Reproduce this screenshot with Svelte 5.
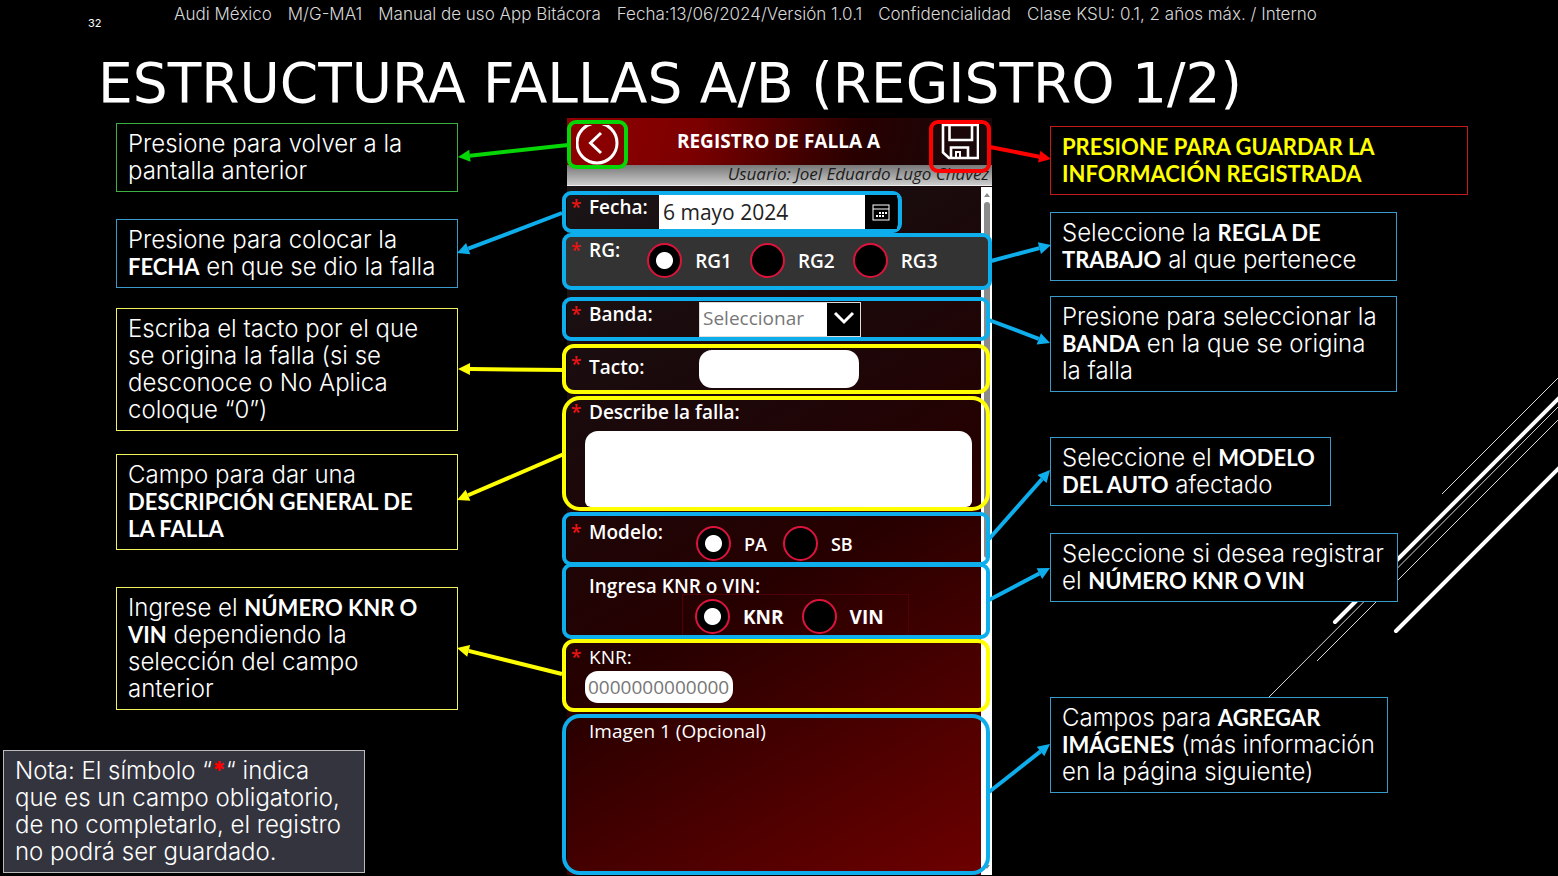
<script>
  const leftNotes = [
    { tone: 'green', gap: 5, lines: [[['Presione para volver a la']], [['pantalla anterior']]] },
    { tone: 'blue', gap: 27, lines: [[['Presione para colocar la']], [['FECHA', true], [' en que se dio la falla']]] },
    { tone: 'yellow', gap: 20, lines: [[['Escriba el tacto por el que']], [['se origina la falla (si se']], [['desconoce o No Aplica']], [['coloque “0”)']]] },
    { tone: 'yellow', gap: 23, lines: [[['Campo para dar una']], [['DESCRIPCIÓN GENERAL DE', true]], [['LA FALLA', true]]] },
    { tone: 'yellow', gap: 37, lines: [[['Ingrese el '], ['NÚMERO KNR O', true]], [['VIN', true], [' dependiendo la']], [['selección del campo']], [['anterior']]] }
  ];
  const rightNotes = [
    { tone: 'red', gap: 8, width: 418, lines: [[['PRESIONE PARA GUARDAR LA', true]], [['INFORMACIÓN REGISTRADA', true]]] },
    { tone: 'blue', gap: 17, width: 347, lines: [[['Seleccione la '], ['REGLA DE', true]], [['TRABAJO', true], [' al que pertenece']]] },
    { tone: 'blue', gap: 15, width: 347, lines: [[['Presione para seleccionar la']], [['BANDA', true], [' en la que se origina']], [['la falla']]] },
    { tone: 'blue', gap: 45, width: 281, lines: [[['Seleccione el '], ['MODELO', true]], [['DEL AUTO', true], [' afectado']]] },
    { tone: 'blue', gap: 27, width: 348, lines: [[['Seleccione si desea registrar']], [['el '], ['NÚMERO KNR O VIN', true]]] },
    { tone: 'blue', gap: 95, width: 338, lines: [[['Campos para '], ['AGREGAR', true]], [['IMÁGENES', true], [' (más información']], [['en la página siguiente)']]] }
  ];
  const green = '#06d506', blue = '#0eaeec', yellow = '#ffff00', red = '#ff0000';
  const arrows = [
    [568, 145, 458, 157, green], [562, 213, 457, 253, blue], [565, 370, 458, 369, yellow],
    [564, 454, 457, 500, yellow], [562, 674, 457, 648, yellow], [990, 147, 1051, 159, red],
    [991, 261, 1051, 245, blue], [989, 320, 1050, 343, blue], [989, 539, 1050, 470, blue],
    [989, 600, 1050, 568, blue], [989, 792, 1050, 744, blue]
  ].map(([x1, y1, x2, y2, color]) => {
    const len = Math.hypot(x2 - x1, y2 - y1);
    const ux = (x2 - x1) / len, uy = (y2 - y1) / len;
    const bx = x2 - ux * 12, by = y2 - uy * 12;
    return {
      x1, y1, bx, by, color,
      head: `${x2},${y2} ${bx - uy * 6},${by + ux * 6} ${bx + uy * 6},${by - ux * 6}`
    };
  });
  let rg = $state('RG1');
  let modelo = $state('PA');
  let tipo = $state('KNR');
</script>

{#snippet note(n)}
  <p class="note {n.tone}" style:margin-top="{n.gap}px" style:width={n.width ? n.width + 'px' : null}>
    {#each n.lines as line}
      <span class="line">{#each line as [text, strong]}{#if strong}<strong>{text}</strong>{:else}{text}{/if}{/each}</span>
    {/each}
  </p>
{/snippet}

<div class="slide">
  <svg class="rays" viewBox="1258 368 300 340" aria-hidden="true">
    <path d="M1442 494 1558 378M1268 698 1558 407M1317 661 1558 420" fill="none" stroke="#d8d8d8" />
    <path d="M1335 622 1560 397M1396 631 1560 467" fill="none" stroke="#fff" stroke-width="4" stroke-linecap="round" />
  </svg>

  <header class="meta">
    <span class="page">32</span>
    <div class="parts">
      <span>Audi México</span>
      <span>M/G-MA1</span>
      <span>Manual de uso App Bitácora</span>
      <span>Fecha:13/06/2024/Versión 1.0.1</span>
      <span>Confidencialidad</span>
      <span>Clase KSU: 0.1, 2 años máx. / Interno</span>
    </div>
  </header>
  <h1>ESTRUCTURA FALLAS A/B (REGISTRO 1/2)</h1>

  <main>
    <div class="left">
      {#each leftNotes as n}{@render note(n)}{/each}
      <p class="legend">
        <span class="line">Nota: El símbolo “<b>*</b>“ indica</span>
        <span class="line">que es un campo obligatorio,</span>
        <span class="line">de no completarlo, el registro</span>
        <span class="line">no podrá ser guardado.</span>
      </p>
    </div>

    <div class="centre">
      <form class="phone" onsubmit={(e) => e.preventDefault()}>
        <div class="bar">
          <button type="button" class="back" aria-label="Volver">
            <svg width="44" height="40" viewBox="0 0 44 40"><g fill="none" stroke="#fff" stroke-width="3"><circle cx="21" cy="18" r="20" /><path d="M25 8 14.500 18 25 28" /></g></svg>
          </button>
          <h2>REGISTRO DE FALLA A</h2>
          <button type="button" class="save" aria-label="Guardar">
            <svg width="38" height="37" viewBox="0 0 38 37"><g fill="none" stroke="#fff" stroke-width="2.6"><path d="M2 1V28.500L8 34H37V1Z" /><path d="M8.500 1V16H31V1" /><path d="M10 34V23.500H27V34" /><path d="M15 34V28H19V34" stroke-width="2" /></g></svg>
          </button>
        </div>
        <p class="user">Usuario: Joel Eduardo Lugo Chavez</p>

        <div class="body">
          <div class="box fecha">
            <i>*</i><label for="fecha">Fecha:</label>
            <input id="fecha" type="text" value="6 mayo 2024" />
            <button type="button" aria-label="Calendario">
              <svg width="18" height="17" viewBox="0 0 18 17"><g fill="none" stroke="#fff"><rect x="1" y="1" width="16" height="15" /><path d="M1 5H17" /><path d="M7 9H15M4 12H13" stroke-width="2" stroke-dasharray="2 1" /></g></svg>
            </button>
          </div>

          <div class="box rg" role="radiogroup" aria-labelledby="l-rg">
            <i>*</i><span class="name" id="l-rg">RG:</span>
            <div class="radios">
              {#each ['RG1', 'RG2', 'RG3'] as v}
                <label><input type="radio" name="rg" value={v} bind:group={rg} />{v}</label>
              {/each}
            </div>
          </div>

          <div class="box banda">
            <i>*</i><label for="banda">Banda:</label>
            <div class="select">
              <select id="banda"><option>Seleccionar</option></select>
              <svg width="22" height="14" viewBox="0 0 22 14"><path d="M2 2 11 11 20 2" fill="none" stroke="#fff" stroke-width="3" /></svg>
            </div>
          </div>

          <div class="box tacto">
            <i>*</i><label for="tacto">Tacto:</label>
            <input id="tacto" type="text" />
          </div>

          <div class="box describe">
            <i>*</i><label for="describe">Describe la falla:</label>
            <textarea id="describe"></textarea>
          </div>

          <div class="box modelo" role="radiogroup" aria-labelledby="l-modelo">
            <i>*</i><span class="name" id="l-modelo">Modelo:</span>
            <div class="radios">
              {#each ['PA', 'SB'] as v}
                <label><input type="radio" name="modelo" value={v} bind:group={modelo} />{v}</label>
              {/each}
            </div>
          </div>

          <div class="box tipo" role="radiogroup" aria-labelledby="l-tipo">
            <span class="name" id="l-tipo">Ingresa KNR o VIN:</span>
            <div class="radios">
              {#each ['KNR', 'VIN'] as v}
                <label><input type="radio" name="tipo" value={v} bind:group={tipo} />{v}</label>
              {/each}
            </div>
          </div>

          <div class="box knr">
            <i>*</i><label for="knr">KNR:</label>
            <input id="knr" type="text" placeholder="0000000000000" />
          </div>

          <div class="box imagen"><i></i><span class="name">Imagen 1 (Opcional)</span></div>

          <div class="scroll" aria-hidden="true">
            <svg width="8" height="6" viewBox="0 0 8 6"><path d="M1 5 4 1 7 5Z" fill="#888" /></svg>
            <span></span>
            <svg width="8" height="6" viewBox="0 0 8 6"><path d="M1 1 4 5 7 1Z" fill="#888" /></svg>
          </div>
        </div>
      </form>

      <svg class="arrows" viewBox="452 118 610 758" aria-hidden="true">
        {#each arrows as a}
          <line x1={a.x1} y1={a.y1} x2={a.bx} y2={a.by} stroke={a.color} stroke-width="4" />
          <polygon points={a.head} fill={a.color} />
        {/each}
      </svg>
    </div>

    <div class="right">
      {#each rightNotes as n}{@render note(n)}{/each}
    </div>
  </main>
</div>

<style>
  :global(body) { margin: 0; background: #000; }
  .slide, .slide * { box-sizing: border-box; }
  .slide {
    position: relative;
    min-height: 100vh;
    overflow: hidden;
    background: #000;
    color: #fff;
    font-family: Inter, 'Open Sans', sans-serif;
  }
  .rays { position: absolute; right: 0; top: 368px; width: 300px; height: 340px; }
  .meta {
    display: flex;
    height: 30px;
    padding-left: 88px;
    line-height: 28px;
    white-space: nowrap;
  }
  .page { width: 86px; padding-top: 9px; font-size: 11px; }
  .parts { display: flex; gap: 16px; font-size: 17px; font-weight: 300; color: #d8d8d8; }
  h1 {
    height: 88px;
    margin: 0;
    padding-left: 98px;
    font: 400 55px/106px 'DejaVu Sans', sans-serif;
    white-space: nowrap;
  }
  main {
    position: relative;
    display: grid;
    grid-template-columns: 1fr 430px 1fr;
    padding-right: 4px;
  }
  .left, .right { display: flex; flex-direction: column; }
  .left { align-items: flex-end; padding-right: 104px; }
  .right { align-items: flex-start; padding-left: 58px; }
  .note, .legend {
    margin: 0;
    padding: 6px 11px 7px;
    border: 1px solid;
    font-size: 24px;
    line-height: 27px;
    font-weight: 300;
    background: #000;
  }
  .note { width: 342px; }
  .line { display: block; white-space: nowrap; color: #fff; }
  strong { font-family: Lato, sans-serif; font-size: 22px; line-height: 1; font-weight: 700; }
  .green { border-color: #3cb043; }
  .blue { border-color: #3a9bcb; }
  .yellow { border-color: #f2f25a; }
  .red { border-color: #c41a1a; }
  .red .line { color: #ff0; }
  .legend {
    align-self: flex-start;
    width: 362px;
    margin: 40px 0 0 3px;
    background: #34343e;
    border-color: #bbb;
  }
  .legend b { color: #f00; font-weight: 800; }

  .centre { position: relative; font-family: 'Open Sans', 'Noto Sans', sans-serif; }
  .arrows { position: absolute; left: -110px; top: 0; width: 610px; height: 758px; pointer-events: none; }
  .phone { margin-left: 5px; }
  .bar {
    position: relative;
    display: flex;
    justify-content: space-between;
    align-items: flex-start;
    height: 47px;
    padding: 2px 1px 0 0;
    background: linear-gradient(100deg, #900000 0%, #7c0000 30%, #280000 68%, #16090b 100%);
  }
  button { padding: 0; background: none; color: inherit; font: inherit; }
  .bar button { border: 4px solid #06d506; border-radius: 9px; }
  .bar svg { display: block; margin: 0 auto; }
  .back { width: 61px; height: 49px; }
  .bar .save { width: 62px; height: 53px; border-color: #f00; padding-bottom: 8px; }
  h2 { margin: 0; font-size: 19px; line-height: 42px; font-weight: 700; }
  .user {
    height: 21px;
    margin: 0;
    padding-right: 3px;
    text-align: right;
    font-size: 17px;
    line-height: 18px;
    font-style: italic;
    color: #1c1c1c;
    background: linear-gradient(#777, #ccc);
    border-bottom: 1px solid #eee;
  }
  .body {
    position: relative;
    padding-top: 5px;
    background: linear-gradient(150deg, #1a1517 0%, #1a090b 28%, #260000 55%, #480000 76%, #6e0000 100%);
  }
  .box {
    position: relative;
    z-index: 1;
    display: grid;
    grid-template-columns: 18px auto 1fr;
    align-items: start;
    width: 428px;
    margin-left: -5px;
    padding: 1px 0 0 5px;
    border: 4px solid #0eaeec;
    border-radius: 9px;
    font-size: 19px;
    line-height: 24px;
    font-weight: 600;
    white-space: nowrap;
  }
  i { color: #e81414; font-style: normal; font-size: 19px; }
  .box input[type='text'], textarea, select {
    width: 100%;
    height: 100%;
    margin: 0;
    border: 0;
    background: #fff;
    font: 400 19px/24px 'Open Sans', sans-serif;
    color: #222;
  }
  .fecha { grid-template-columns: 18px 70px 206px 32px; width: 340px; height: 42px; padding-top: 0; }
  .fecha input[type='text'] { padding: 0 4px; font-size: 21px; }
  .fecha button { display: grid; place-items: center; height: 34px; border: 0; background: #000; }
  .rg { height: 57px; background: #333; width: 430px; }
  .banda { grid-template-columns: 18px 110px 162px; height: 44px; margin-top: 7px; }
  .tacto { grid-template-columns: 18px 110px 160px; height: 50px; margin-top: 3px; border-color: #ff0; border-radius: 12px; }
  .tacto label { padding-top: 6px; }
  .tacto i { padding-top: 3px; }
  .tacto input[type='text'] { height: 38px; margin-top: 1px; border-radius: 13px; }
  .describe {
    grid-template-columns: 18px 1fr;
    grid-template-rows: 31px 1fr;
    height: 115px;
    margin-top: 2px;
    padding-top: 0;
    border-color: #ff0;
    border-radius: 18px;
  }
  .describe textarea {
    grid-column: 1 / 3;
    display: block;
    width: 387px;
    margin-left: 14px;
    border-radius: 13px 13px 6px 6px;
    resize: none;
  }
  .modelo { height: 54px; margin-top: 1px; padding-top: 4px; }
  .tipo { display: block; height: 76px; margin-top: -3px; padding-top: 7px; }
  .tipo .name { display: block; margin-left: 18px; }
  .knr {
    grid-template-columns: 18px 1fr;
    grid-template-rows: 26px 32px;
    height: 73px;
    padding-top: 2px;
    border-color: #ff0;
    border-radius: 12px;
  }
  .knr label { font-weight: 400; }
  .knr input[type='text'] {
    grid-column: 1 / 3;
    width: 148px;
    margin-left: 14px;
    padding: 0 3px;
    border-radius: 13px;
  }
  .knr input::placeholder { color: #777; }
  .imagen { height: 161px; margin-top: 2px; border-radius: 18px; font-weight: 400; }
  .select { position: relative; height: 35px; }
  .select select {
    padding: 0 3px 4px;
    appearance: none;
    border: 1px solid #ddd;
    color: #777;
    background: linear-gradient(#000, #000) right / 33px 100% no-repeat #fff;
  }
  .select svg { position: absolute; right: 6px; top: 9px; pointer-events: none; }
  .radios { display: flex; gap: 18px; }
  .radios label { display: flex; align-items: center; gap: 13px; }
  .rg .radios { padding: 5px 0 0 27px; }
  .modelo .radios { gap: 16px; padding: 6px 0 0 33px; font-size: 18px; }
  .tipo .radios {
    width: 227px;
    height: 41px;
    margin: -4px 0 0 111px;
    padding: 4px 0 0 12px;
    border: 1px solid #500008;
    border-bottom: 0;
    font-weight: 700;
    align-items: flex-start;
  }
  input[type='radio'] {
    appearance: none;
    width: 35px;
    height: 35px;
    margin: 0;
    border: 2px solid #dc143c;
    border-radius: 50%;
    background: #000;
  }
  input[type='radio']:checked { background: radial-gradient(circle, #fff 8px, #000 9px); }
  .scroll {
    position: absolute;
    inset: 1px 0 0 auto;
    display: flex;
    flex-direction: column;
    align-items: center;
    width: 11px;
    padding: 5px 0;
    background: #fff;
  }
  .scroll span { width: 6px; height: 356px; margin: 4px 0 auto; border-radius: 3px; background: #8b8b8b; }
</style>
